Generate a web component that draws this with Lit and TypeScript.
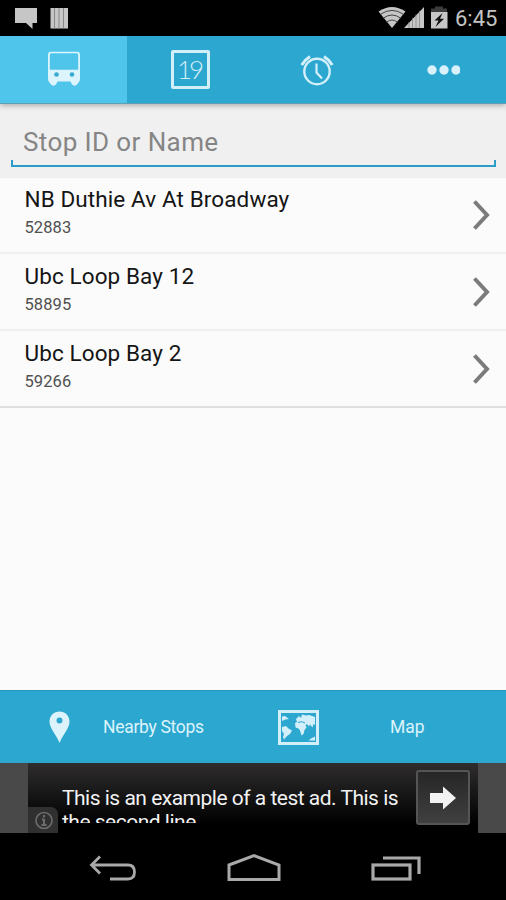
import { LitElement, html, css } from "lit";
import { customElement, property } from "lit/decorators.js";

interface Stop {
  name: string;
  id: string;
}

const STOPS: Stop[] = [
  { name: "NB Duthie Av At Broadway", id: "52883" },
  { name: "Ubc Loop Bay 12", id: "58895" },
  { name: "Ubc Loop Bay 2", id: "59266" },
];

const base = css`
  :host {
    display: block;
    box-sizing: border-box;
    font-family: Roboto, "Noto Sans", sans-serif;
  }
  svg {
    display: block;
  }
`;

@customElement("status-bar")
class StatusBar extends LitElement {
  static styles = [
    base,
    css`
      :host {
        height: 36px;
        background: #000;
      }
      .bar {
        display: flex;
        height: 36px;
        align-items: center;
        justify-content: space-between;
        color: #c4c4c4;
      }
      .right {
        display: flex;
        align-items: center;
      }
      .clock {
        width: 51px;
        font-size: 22px;
        line-height: 38px;
        height: 36px;
        white-space: nowrap;
      }
    `,
  ];
  render() {
    return html`<div class="bar">
      <svg width="80" height="36" viewBox="0 0 80 36">
        <path d="M15 8H37V23H32.500V29L26 23H15Z" fill="#c6c6c6" />
        <rect x="50.500" y="8" width="17.500" height="20.500" fill="#c6c6c6" />
        <path d="M54.500 8V28.500M59 8V28.500M63.500 8V28.500" stroke="#888" stroke-width="1" />
      </svg>
      <div class="right">
        <svg width="77" height="36" viewBox="0 0 77 36">
          <path d="M0.500 11.500Q14 2.500 27.500 11.500L14 28Z" fill="#c6c6c6" />
          <path
            d="M2.500 14.300Q14 6.500 25.500 14.300M5.500 18Q14 12 22.500 18M8.700 22Q14 18 19.300 22"
            fill="none" stroke="#444" stroke-width="1" />
          <path d="M26 28L46 7V28Z" fill="#c6c6c6" />
          <path d="M31 22V28M34.500 18V28M38 14.500V28M41.500 11V28" stroke="#888" stroke-width="0.800" />
          <path d="M53 12V8.500H57V6.500H65V8.500H69V12Z" fill="#3c3c3c" />
          <rect x="53" y="12" width="16.500" height="16.500" fill="#c6c6c6" />
          <path d="M64.500 13L56.500 20.500H60.500L57.500 27L66 18.800H62Z" fill="#111" />
        </svg>
        <div class="clock">6:45</div>
      </div>
    </div>`;
  }
}

@customElement("tab-bar")
class TabBar extends LitElement {
  static styles = [
    base,
    css`
      :host {
        position: relative;
        z-index: 2;
        box-shadow: 0 1px 6px rgba(0, 0, 0, 0.34);
      }
      .tabs {
        display: grid;
        grid-template-columns: 127px 127px 126px 126px;
        height: 68px;
        box-sizing: border-box;
        border-bottom: 1px solid #5f9fb5;
        background: #2ca7d0;
      }
      .tab {
        display: flex;
        align-items: center;
        justify-content: center;
      }
      .active {
        background: #50c5ec;
        padding-bottom: 2px;
      }
      .date {
        width: 39px;
        height: 39px;
        box-sizing: border-box;
        border: 3px solid #d3effa;
        border-radius: 2px;
        color: #d3effa;
        font: 300 26px/32px Lato, "Open Sans", sans-serif;
        text-align: center;
        letter-spacing: -3.200px;
        text-indent: -3px;
      }
    `,
  ];
  render() {
    return html`<div class="tabs">
      <div class="tab active">
        <svg width="34" height="36" viewBox="0 0 34 36">
          <path
            fill="#dcf4fc" fill-rule="evenodd"
            d="M4 .7H30Q33 .7 33 3.700V28Q33 30 31.500 31.500L29.500 34Q27 35.500 25 33.500L23.500 30.500H10.500L9 33.500Q7 35.500 4.500 34L2.500 31.500Q1 30 1 28V3.700Q1 .7 4 .7ZM4.500 2.200Q2.800 2.200 2.800 3.800V18.700H31.200V3.800Q31.200 2.200 29.500 2.200Z" />
          <circle cx="9.500" cy="23.500" r="2.300" fill="#38a9d0" />
          <circle cx="25" cy="23.500" r="2.300" fill="#38a9d0" />
        </svg>
      </div>
      <div class="tab"><div class="date">19</div></div>
      <div class="tab">
        <svg width="34" height="32" viewBox="0 0 34 32" fill="none" stroke="#d3effa">
          <circle cx="17" cy="17.500" r="12.700" stroke-width="2.400" />
          <path d="M16.500 9.500V18.500L22 24.500" stroke-width="2.200" />
          <path d="M1.700 11Q4.500 6 10 2.500M32.300 11Q29.500 6 24 2.500" stroke-width="3" />
        </svg>
      </div>
      <div class="tab">
        <svg width="34" height="12" viewBox="0 0 34 12" fill="#d8f1fa">
          <circle cx="6" cy="6" r="4.700" />
          <circle cx="18" cy="6" r="4.700" />
          <circle cx="30" cy="6" r="4.700" />
        </svg>
      </div>
    </div>`;
  }
}

@customElement("stop-search")
class StopSearch extends LitElement {
  static styles = [
    base,
    css`
      :host {
        position: relative;
        z-index: 1;
        height: 74px;
        padding: 17px 10px 0 11px;
        background: #f0f0f0;
      }
      .field {
        height: 46px;
        box-sizing: border-box;
        padding-left: 12px;
        font-size: 26px;
        line-height: 42px;
        letter-spacing: 0.4px;
        color: #858585;
        background:
          linear-gradient(#2c9dc9, #2c9dc9) 0 100% / 2px 5px no-repeat,
          linear-gradient(#2c9dc9, #2c9dc9) 100% 100% / 2px 5px no-repeat;
        border-bottom: 2px solid #2c9dc9;
      }
    `,
  ];
  render() {
    return html`<div class="field">Stop ID or Name</div>`;
  }
}

@customElement("stop-row")
class StopRow extends LitElement {
  @property({ attribute: false }) stop!: Stop;
  static styles = [
    base,
    css`
      :host {
        height: 77px;
        border-bottom: 2px solid #f0f0f0;
        background: #fbfbfb;
      }
      :host(:last-of-type) {
        border-bottom-color: #dfdfdf;
      }
      .row {
        display: flex;
        justify-content: space-between;
        align-items: center;
        height: 75px;
        padding: 0 16px 0 24.500px;
      }
      .name {
        font-size: 22.500px;
        line-height: 28px;
        letter-spacing: 0.1px;
        color: #151515;
      }
      .id {
        font-size: 16.500px;
        line-height: 20px;
        margin-top: 5px;
        letter-spacing: 0.1px;
        color: #505050;
      }
      .text {
        padding-bottom: 7px;
      }
    `,
  ];
  render() {
    return html`<div class="row">
      <div class="text">
        <div class="name">${this.stop.name}</div>
        <div class="id">${this.stop.id}</div>
      </div>
      <svg width="18" height="30" viewBox="0 0 18 30">
        <path d="M2.500 1.500L15 15L2.500 28.500" fill="none" stroke="#7b7b7b" stroke-width="4" />
      </svg>
    </div>`;
  }
}

@customElement("action-bar")
class ActionBar extends LitElement {
  static styles = [
    base,
    css`
      .bar {
        display: flex;
        align-items: center;
        height: 73px;
        padding-left: 49px;
        box-sizing: border-box;
        border-top: 1px solid #2497bf;
        background: #2ca7d0;
        color: #dcf3fb;
        font-size: 17.500px;
        white-space: nowrap;
      }
      .nearby {
        width: 175px;
        margin-left: 33px;
        letter-spacing: -0.300px;
      }
      .map {
        margin-left: 71px;
      }
    `,
  ];
  render() {
    return html`<div class="bar">
      <svg width="21" height="33" viewBox="0 0 20 33">
        <path
          fill="#dcf3fb" fill-rule="evenodd"
          d="M10 .5C15.500 .5 20 4.500 20 10.500C20 17 14 22.500 10 32C6 22.500 0 17 0 10.500C0 4.500 4.500 .5 10 .5ZM10 6.500A3 3 0 1 0 10 12.500A3 3 0 1 0 10 6.500Z" />
      </svg>
      <span class="nearby">Nearby Stops</span>
      <svg width="41" height="35" viewBox="0 0 41 35">
        <rect x="1.500" y="1.500" width="38" height="32" fill="none" stroke="#d3effa" stroke-width="3" />
        <path
          fill="#d3effa"
          d="M4 6.500L7 6L11 9L7.500 9.500L4 11ZM4 17L8 16L10.500 18.500L14 20.500L12 24L9 26L6 29.500L5 27L6 24L4 21ZM17 13L19 12L18 9L21 6L23 8L24 4.500L28 5.500L31 5L37 7V15L35.500 14L34.500 17.500L32 14.500L31 16.500L29 14L27.500 15L28.500 17.500L26.500 20L25.500 24L23.500 25.500L22 20.500L20.500 18.500L17.500 17.500ZM30.500 30.500L33 28.500L37 26.500V30.500Z" />
        <path d="M20 12.500Q24 10.500 27 13" fill="none" stroke="#2ca7d0" stroke-width="1" />
      </svg>
      <span class="map">Map</span>
    </div>`;
  }
}

@customElement("ad-banner")
class AdBanner extends LitElement {
  static styles = [
    base,
    css`
      :host {
        height: 70px;
        padding: 0 28px;
        background: #494949;
      }
      .ad {
        display: flex;
        height: 70px;
        position: relative;
        background: linear-gradient(#2f2d2d, #000 88%);
      }
      .copy {
        width: 354px;
        height: 37px;
        margin: 23px 0 0 34px;
        overflow: hidden;
        color: #f2f2f2;
        font-size: 21px;
        line-height: 24px;
        letter-spacing: -0.500px;
      }
      .line {
        white-space: nowrap;
      }
      .go {
        width: 54px;
        height: 55px;
        box-sizing: border-box;
        margin-top: 7px;
        border: 2px solid #555;
        border-radius: 3px;
        background: linear-gradient(#262626, #404040);
        display: flex;
        align-items: center;
        justify-content: center;
      }
      .info {
        position: absolute;
        left: 0;
        bottom: 0;
        width: 30px;
        height: 26px;
        border-radius: 0 7px 0 0;
        background: #303030;
      }
    `,
  ];
  render() {
    return html`<div class="ad">
      <div class="copy">
        <div class="line">This is an example of a test ad. This is</div>
        <div class="line">the second line.</div>
      </div>
      <div class="go">
        <svg width="26" height="24" viewBox="0 0 26 24">
          <path d="M0 7H13V0.500L26 12L13 23.500V17H0Z" fill="#f2f2f2" />
        </svg>
      </div>
      <div class="info">
        <svg width="30" height="26" viewBox="0 0 30 26" fill="none" stroke="#6c6c6c">
          <circle cx="16" cy="13.500" r="8" stroke-width="1.600" />
          <path d="M16 8V10.500M16 12V18M14 12.500H16M13.500 18H18.500" stroke-width="2" />
        </svg>
      </div>
    </div>`;
  }
}

@customElement("nav-bar")
class NavBar extends LitElement {
  static styles = [
    base,
    css`
      .nav {
        display: flex;
        justify-content: space-between;
        align-items: center;
        height: 67px;
        padding: 5px 85px 0 89px;
        box-sizing: border-box;
        background: #000;
      }
    `,
  ];
  render() {
    return html`<div class="nav">
      <svg width="48" height="30" viewBox="0 0 48 30" fill="none" stroke="#a9a9a9" stroke-width="2.800">
        <path d="M3 11H39Q45.500 11 45.500 18Q45.500 25 39 25H21M11 2.500L2.500 11L11 19.500" />
      </svg>
      <svg width="54" height="30" viewBox="0 0 54 30" fill="none" stroke="#a9a9a9" stroke-width="3">
        <path d="M2 11L27 1.700L52 11V25.500H2Z" />
      </svg>
      <svg width="50" height="30" viewBox="0 0 50 30" fill="none" stroke="#a9a9a9" stroke-width="3.200">
        <rect x="2" y="11" width="37" height="14" />
        <path d="M12 4H48V20" />
      </svg>
    </div>`;
  }
}

@customElement("app-root")
class AppRoot extends LitElement {
  static styles = [
    base,
    css`
      .screen {
        display: flex;
        flex-direction: column;
        width: 506px;
        height: 900px;
        overflow: hidden;
        background: #fbfbfb;
      }
      .list {
        flex: 1;
        margin-top: -1px;
      }
    `,
  ];
  render() {
    return html`<div class="screen">
      <status-bar></status-bar>
      <tab-bar></tab-bar>
      <stop-search></stop-search>
      <div class="list">${STOPS.map((s) => html`<stop-row .stop=${s}></stop-row>`)}</div>
      <action-bar></action-bar>
      <ad-banner></ad-banner>
      <nav-bar></nav-bar>
    </div>`;
  }
}
